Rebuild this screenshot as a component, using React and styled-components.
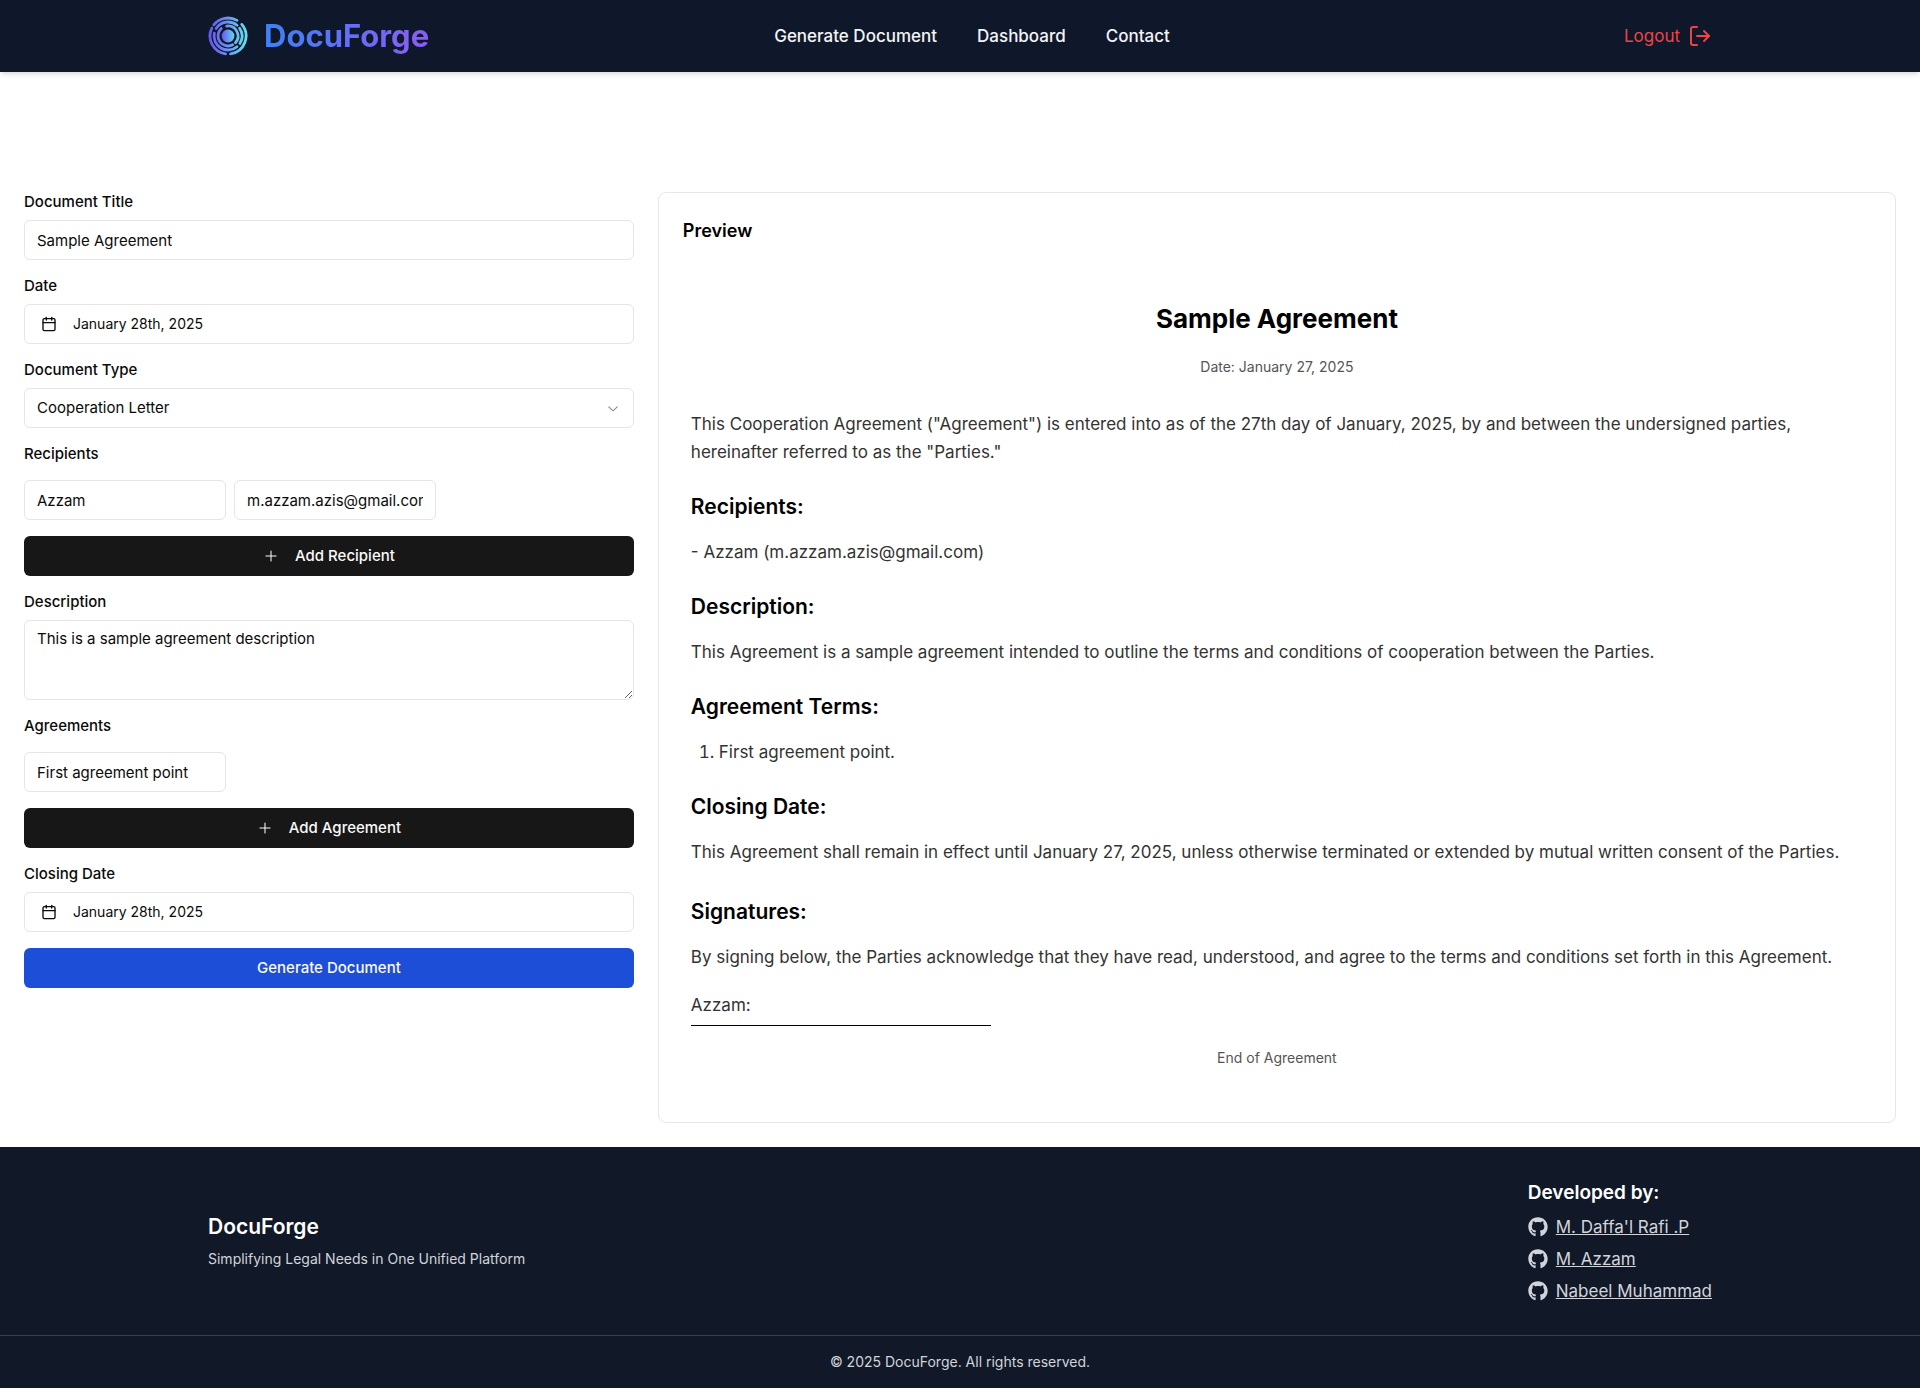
import React, { useState } from "react";
import styled, { createGlobalStyle } from "styled-components";
import { Calendar, LogOut } from "lucide-react";
import { FaGithub } from "react-icons/fa";

const GlobalStyle = createGlobalStyle`
  *, *::before, *::after { box-sizing: border-box; }
  body {
    margin: 0;
    background: #ffffff;
    color: #0a0a0a;
    font-family: Inter, "Noto Sans", sans-serif;
    font-size: 17px;
    line-height: 24px;
  }
  h1, h2, h3, p, ul, ol { margin: 0; padding: 0; }
  ul { list-style: none; }
  a { color: inherit; }
  button, input, select, textarea { font: inherit; color: inherit; }
`;

const Container = styled.div`
  width: 100%;
  max-width: 1536px;
  margin: 0 auto;
  padding: 0 16px;
`;

const Header = styled.header`
  position: relative;
  display: flex;
  height: 72px;
  background: #0f172a;
  box-shadow: 0 4px 6px -1px rgba(0, 0, 0, 0.1), 0 2px 4px -2px rgba(0, 0, 0, 0.1);
`;

const HeaderBar = styled(Container)`
  display: grid;
  grid-template-columns: 1fr auto 1fr;
  align-items: center;
`;

const Brand = styled.a`
  display: flex;
  align-items: center;
  justify-self: start;
  gap: 16px;
  text-decoration: none;
`;

const BrandName = styled.span`
  font-size: 31px;
  line-height: 36px;
  font-weight: 700;
  color: transparent;
  background: linear-gradient(to right, #3b82f6, #8b5cf6);
  background-clip: text;
  -webkit-background-clip: text;
`;

const Nav = styled.nav`
  display: flex;
  gap: 40px;
  padding-left: 24px;
`;

const NavLink = styled.a`
  color: #f3f4f6;
  font-weight: 500;
  text-decoration: none;
`;

const LogoutButton = styled.button`
  display: flex;
  align-items: center;
  justify-self: end;
  gap: 8px;
  padding: 0;
  border: 0;
  background: none;
  color: #ef4444;
  cursor: pointer;
`;

const Main = styled.main`
  display: grid;
  grid-template-columns: 33fr 67fr;
  gap: 24px;
  margin-top: 96px;
  padding: 24px;
`;

const Form = styled.form`
  display: flex;
  flex-direction: column;
  gap: 16px;
  min-width: 0;
  font-size: 15px;
  line-height: 20px;
`;

const Field = styled.div`
  display: flex;
  flex-direction: column;
  gap: ${(p) => (p.$spaced ? 16 : 8)}px;
`;

const Label = styled.label`
  font-weight: 500;
`;

const controlBox = `
  border: 1px solid #e5e5e5;
  border-radius: 6px;
  background: #ffffff;
  outline-color: #a3a3a3;
`;

const Input = styled.input`
  ${controlBox}
  width: ${(p) => (p.$compact ? "202px" : "100%")};
  height: 40px;
  padding: 8px 12px;
`;

const TextArea = styled.textarea`
  ${controlBox}
  display: block;
  width: 100%;
  height: 80px;
  padding: 8px 12px;
`;

const SelectWrap = styled.div`
  position: relative;
  svg {
    position: absolute;
    right: 13px;
    top: 12px;
    opacity: 0.5;
    pointer-events: none;
  }
`;

const Select = styled.select`
  ${controlBox}
  appearance: none;
  display: block;
  width: 100%;
  height: 40px;
  padding: 8px 40px 8px 12px;
`;

const DateButton = styled.button`
  ${controlBox}
  display: flex;
  align-items: center;
  gap: 16px;
  width: 100%;
  height: 40px;
  padding: 0 16px;
  font-size: 14px;
  text-align: left;
  cursor: pointer;
`;

const Row = styled.div`
  display: flex;
  gap: 8px;
`;

const Button = styled.button`
  display: flex;
  align-items: center;
  justify-content: center;
  gap: 16px;
  width: 100%;
  height: 40px;
  border: 0;
  border-radius: 6px;
  background: ${(p) => (p.$primary ? "#1d4ed8" : "#171717")};
  color: #fafafa;
  font-weight: 500;
  cursor: pointer;
`;

const Card = styled.section`
  min-width: 0;
  padding: 24px;
  border: 1px solid #e5e7eb;
  border-radius: 8px;
`;

const CardTitle = styled.h2`
  font-size: 18px;
  line-height: 28px;
  font-weight: 600;
  color: #000000;
`;

const Paper = styled.article`
  display: flex;
  flex-direction: column;
  padding: 56px 8px 28px;
  color: #333333;
  line-height: 28px;
`;

const PaperTitle = styled.h1`
  font-size: 26px;
  line-height: 36px;
  font-weight: 700;
  color: #000000;
  text-align: center;
`;

const Note = styled.p`
  font-size: 14px;
  line-height: 24px;
  color: #555555;
  text-align: center;
`;

const DateNote = styled(Note)`
  margin: 18px 0 31px;
`;

const PaperSection = styled.section`
  display: flex;
  flex-direction: column;
  gap: 16px;
  margin-top: ${(p) => (p.$wide ? 31 : 26)}px;
`;

const PaperHeading = styled.h3`
  font-size: 21px;
  line-height: 30px;
  font-weight: 600;
  color: #000000;
`;

const Terms = styled.ol`
  padding-left: 28px;
`;

const Signature = styled.div`
  width: 300px;
  margin: 4px 0 20px;
  padding-bottom: 6px;
  border-bottom: 1px solid #000000;
`;

const Footer = styled.footer`
  background: #111827;
  color: #d1d5db;
`;

const FooterTop = styled(Container)`
  display: flex;
  align-items: center;
  justify-content: space-between;
  padding: 32px 16px;
`;

const FooterGroup = styled.div`
  display: flex;
  flex-direction: column;
  gap: 8px;
`;

const FooterBrand = styled.h2`
  font-size: 21px;
  line-height: 28px;
  font-weight: 600;
  color: #ffffff;
`;

const FooterHeading = styled.h3`
  font-size: 19px;
  line-height: 28px;
  font-weight: 600;
  color: #ffffff;
`;

const Small = styled.p`
  font-size: 14px;
  line-height: 20px;
`;

const Credits = styled.ul`
  display: flex;
  flex-direction: column;
  gap: 8px;
`;

const Credit = styled.li`
  display: flex;
  align-items: center;
  gap: 8px;
`;

const Copyright = styled.div`
  display: flex;
  justify-content: center;
  padding: 16px;
  border-top: 1px solid #374151;
`;

const arc = (r, from, to) => {
  const point = (deg) => {
    const a = (deg * Math.PI) / 180;
    return `${(20 + r * Math.cos(a)).toFixed(2)} ${(20 + r * Math.sin(a)).toFixed(2)}`;
  };
  return `M${point(from)}A${r} ${r} 0 ${to - from > 180 ? 1 : 0} 1 ${point(to)}`;
};

const LOGO_ARCS = [
  [18, 218, 300],
  [18, 320, 442],
  [18, 98, 206],
  [14, 212, 310],
  [14, 326, 392],
  [14, 50, 192],
  [10, 262, 402],
  [10, 62, 228],
];

function Logo() {
  return (
    <svg width="40" height="40" viewBox="0 0 40 40" aria-hidden="true">
      <defs>
        <linearGradient id="logo-stroke" gradientUnits="userSpaceOnUse" x1="2" y1="20" x2="38" y2="20">
          <stop offset="0" stopColor="#6558ee" />
          <stop offset="0.5" stopColor="#6c93f3" />
          <stop offset="1" stopColor="#62e2ee" />
        </linearGradient>
        <linearGradient id="logo-core" x1="0" y1="0" x2="1" y2="0">
          <stop offset="0" stopColor="#6558ee" />
          <stop offset="1" stopColor="#62d5f0" />
        </linearGradient>
      </defs>
      <g fill="none" stroke="url(#logo-stroke)" strokeWidth="2.8" strokeLinecap="round">
        {LOGO_ARCS.map(([r, from, to]) => (
          <path key={`${r}-${from}`} d={arc(r, from, to)} />
        ))}
      </g>
      <circle cx="20" cy="20" r="6.4" fill="url(#logo-core)" />
    </svg>
  );
}

function PlusIcon() {
  return (
    <svg width="16" height="16" viewBox="0 0 15 15" fill="currentColor" aria-hidden="true">
      <path d="M8 2.75C8 2.47386 7.77614 2.25 7.5 2.25C7.22386 2.25 7 2.47386 7 2.75V7H2.75C2.47386 7 2.25 7.22386 2.25 7.5C2.25 7.77614 2.47386 8 2.75 8H7V12.25C7 12.5261 7.22386 12.75 7.5 12.75C7.77614 12.75 8 12.5261 8 12.25V8H12.25C12.5261 8 12.75 7.77614 12.75 7.5C12.75 7.22386 12.5261 7 12.25 7H8V2.75Z" />
    </svg>
  );
}

function ChevronIcon() {
  return (
    <svg width="16" height="16" viewBox="0 0 15 15" fill="currentColor" aria-hidden="true">
      <path d="M3.13523 6.15803C3.3241 5.95657 3.64052 5.94637 3.84197 6.13523L7.5 9.56464L11.158 6.13523C11.3595 5.94637 11.6759 5.95657 11.8648 6.15803C12.0536 6.35949 12.0434 6.67591 11.842 6.86477L7.84197 10.6148C7.64964 10.7951 7.35036 10.7951 7.15803 10.6148L3.15803 6.86477C2.95657 6.67591 2.94637 6.35949 3.13523 6.15803Z" />
    </svg>
  );
}

function DateField({ id, label }) {
  return (
    <Field>
      <Label htmlFor={id}>{label}</Label>
      <DateButton type="button" id={id}>
        <Calendar size={16} aria-hidden="true" />
        January 28th, 2025
      </DateButton>
    </Field>
  );
}

function DocumentForm() {
  const [title, setTitle] = useState("Sample Agreement");
  const [name, setName] = useState("Azzam");
  const [email, setEmail] = useState("m.azzam.azis@gmail.com");
  const [description, setDescription] = useState("This is a sample agreement description");
  const [point, setPoint] = useState("First agreement point");
  const bind = (value, set) => ({ value, onChange: (e) => set(e.target.value) });

  return (
    <Form onSubmit={(e) => e.preventDefault()}>
      <Field>
        <Label htmlFor="title">Document Title</Label>
        <Input id="title" {...bind(title, setTitle)} />
      </Field>
      <DateField id="date" label="Date" />
      <Field>
        <Label htmlFor="type">Document Type</Label>
        <SelectWrap>
          <Select id="type" defaultValue="cooperation">
            <option value="cooperation">Cooperation Letter</option>
          </Select>
          <ChevronIcon />
        </SelectWrap>
      </Field>
      <Field $spaced>
        <Label htmlFor="recipient-name">Recipients</Label>
        <Row>
          <Input $compact id="recipient-name" {...bind(name, setName)} />
          <Input $compact aria-label="Recipient email" {...bind(email, setEmail)} />
        </Row>
        <Button type="button">
          <PlusIcon />
          Add Recipient
        </Button>
      </Field>
      <Field>
        <Label htmlFor="description">Description</Label>
        <TextArea id="description" {...bind(description, setDescription)} />
      </Field>
      <Field $spaced>
        <Label htmlFor="agreement">Agreements</Label>
        <Row>
          <Input $compact id="agreement" {...bind(point, setPoint)} />
        </Row>
        <Button type="button">
          <PlusIcon />
          Add Agreement
        </Button>
      </Field>
      <DateField id="closing-date" label="Closing Date" />
      <Button $primary type="submit">
        Generate Document
      </Button>
    </Form>
  );
}

function Preview() {
  return (
    <Card>
      <CardTitle>Preview</CardTitle>
      <Paper>
        <PaperTitle>Sample Agreement</PaperTitle>
        <DateNote>Date: January 27, 2025</DateNote>
        <p>
          This Cooperation Agreement ("Agreement") is entered into as of the 27th day of January, 2025, by and between
          the undersigned parties, hereinafter referred to as the "Parties."
        </p>
        <PaperSection>
          <PaperHeading>Recipients:</PaperHeading>
          <p>- Azzam (m.azzam.azis@gmail.com)</p>
        </PaperSection>
        <PaperSection>
          <PaperHeading>Description:</PaperHeading>
          <p>
            This Agreement is a sample agreement intended to outline the terms and conditions of cooperation between
            the Parties.
          </p>
        </PaperSection>
        <PaperSection>
          <PaperHeading>Agreement Terms:</PaperHeading>
          <Terms>
            <li>First agreement point.</li>
          </Terms>
        </PaperSection>
        <PaperSection>
          <PaperHeading>Closing Date:</PaperHeading>
          <p>
            This Agreement shall remain in effect until January 27, 2025, unless otherwise terminated or extended by
            mutual written consent of the Parties.
          </p>
        </PaperSection>
        <PaperSection $wide>
          <PaperHeading>Signatures:</PaperHeading>
          <p>
            By signing below, the Parties acknowledge that they have read, understood, and agree to the terms and
            conditions set forth in this Agreement.
          </p>
          <Signature>Azzam:</Signature>
        </PaperSection>
        <Note>End of Agreement</Note>
      </Paper>
    </Card>
  );
}

const DEVELOPERS = ["M. Daffa'l Rafi .P", "M. Azzam", "Nabeel Muhammad"];

export default function App() {
  return (
    <>
      <GlobalStyle />
      <Header>
        <HeaderBar>
          <Brand href="#">
            <Logo />
            <BrandName>DocuForge</BrandName>
          </Brand>
          <Nav>
            <NavLink href="#generate">Generate Document</NavLink>
            <NavLink href="#dashboard">Dashboard</NavLink>
            <NavLink href="#contact">Contact</NavLink>
          </Nav>
          <LogoutButton type="button">
            Logout
            <LogOut size={24} aria-hidden="true" />
          </LogoutButton>
        </HeaderBar>
      </Header>
      <Main>
        <DocumentForm />
        <Preview />
      </Main>
      <Footer>
        <FooterTop>
          <FooterGroup>
            <FooterBrand>DocuForge</FooterBrand>
            <Small>Simplifying Legal Needs in One Unified Platform</Small>
          </FooterGroup>
          <FooterGroup>
            <FooterHeading>Developed by:</FooterHeading>
            <Credits>
              {DEVELOPERS.map((dev) => (
                <Credit key={dev}>
                  <FaGithub size={20} aria-hidden="true" />
                  <a href="#developer">{dev}</a>
                </Credit>
              ))}
            </Credits>
          </FooterGroup>
        </FooterTop>
        <Copyright>
          <Small>© 2025 DocuForge. All rights reserved.</Small>
        </Copyright>
      </Footer>
    </>
  );
}
